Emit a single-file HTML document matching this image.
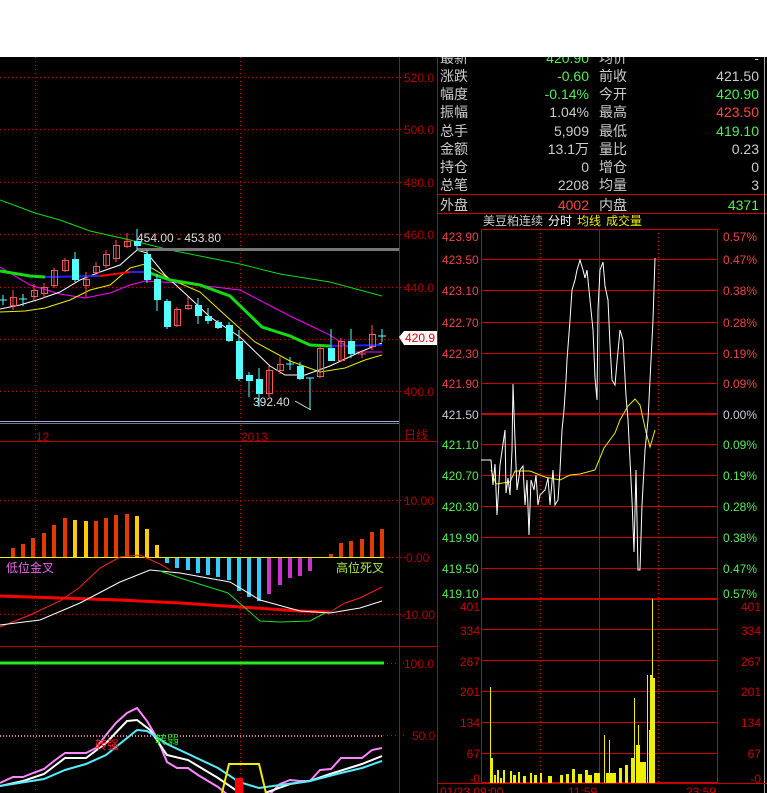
<!DOCTYPE html>
<html><head><meta charset="utf-8"><style>
html,body{margin:0;padding:0;background:#fff;}
body{width:767px;height:793px;overflow:hidden;position:relative;font-family:"Liberation Sans","Noto Sans CJK SC",sans-serif;}
svg{position:absolute;left:0;top:0;}
text{font-family:"Liberation Sans","Noto Sans CJK SC",sans-serif;}
</style></head><body>
<svg width="767" height="793" viewBox="0 0 767 793">
<rect x="0" y="57" width="767" height="736" fill="#000"/>
<g stroke="#c00000" stroke-width="1" fill="none">
<line x1="399.5" y1="57" x2="399.5" y2="793"/>
<line x1="437.5" y1="57" x2="437.5" y2="793"/>
<line x1="0" y1="441.5" x2="437" y2="441.5"/>
<line x1="0" y1="646.5" x2="437" y2="646.5"/>
</g>
<g stroke="#c00000" stroke-width="1" stroke-dasharray="1,3" fill="none">
<line x1="35.5" y1="57" x2="35.5" y2="793"/>
<line x1="240.5" y1="57" x2="240.5" y2="793"/>
<line x1="0" y1="77.5" x2="405" y2="77.5"/>
<line x1="0" y1="129.5" x2="405" y2="129.5"/>
<line x1="0" y1="182.5" x2="405" y2="182.5"/>
<line x1="0" y1="234.5" x2="405" y2="234.5"/>
<line x1="0" y1="287.5" x2="405" y2="287.5"/>
<line x1="0" y1="339.5" x2="405" y2="339.5"/>
<line x1="0" y1="391.5" x2="405" y2="391.5"/>
<line x1="0" y1="500.5" x2="405" y2="500.5"/>
<line x1="0" y1="557.5" x2="405" y2="557.5"/>
<line x1="0" y1="614.5" x2="405" y2="614.5"/>
<line x1="383" y1="663.5" x2="405" y2="663.5"/>
<line x1="383" y1="735.5" x2="405" y2="735.5"/>
</g>
<g font-size="12" fill="#b00000">
<text x="404" y="82">520.0</text><text x="404" y="134">500.0</text><text x="404" y="187">480.0</text>
<text x="404" y="239">460.0</text><text x="404" y="292">440.0</text><text x="404" y="396">400.0</text>
<text x="404" y="505">10.00</text><text x="406" y="562">0.00</text><text x="401" y="619">-10.00</text>
<text x="404" y="668">100.0</text><text x="412" y="740">50.0</text>
<text x="404" y="439" font-size="12">日线</text>
<text x="36" y="441">12</text><text x="241" y="441">2013</text>
</g>
<polygon points="399,337 404,331 437,331 437,345 404,345" fill="#fff"/>
<text x="405" y="342" font-size="12" fill="#d00">420.9</text>
<line x1="0" y1="421.5" x2="399" y2="421.5" stroke="#aab" stroke-width="1"/>
<line x1="0" y1="423.5" x2="399" y2="423.5" stroke="#6677aa" stroke-width="1"/>
<polyline fill="none" stroke="#1d1" stroke-width="1" points="0,200 35,213 60,220 90,231 130,240 170,250 240,264 280,274 330,282 382,296"/>
<polyline fill="none" stroke="#f0f" stroke-width="1" points="0,267 30,285 60,294 85,298 110,293 130,285 145,281 180,283 240,290 290,316 330,335 355,352 382,352"/>
<polyline fill="none" stroke="#ee0" stroke-width="1" points="0,312 25,311 45,308 70,300 90,290 110,285 130,268 145,264 170,279 200,292 225,315 255,342 290,361 320,372 345,368 365,360 382,355"/>
<polyline fill="none" stroke="#fff" stroke-width="1" points="0,309 20,305 40,299 60,292 80,280 100,272 120,265 137,250 147,253 165,275 190,298 210,317 240,337 270,366 285,375 305,375 330,366 360,352 382,343"/>
<polyline fill="none" stroke="#1d1" stroke-width="3" points="0,271 30,276 45,277"/>
<polyline fill="none" stroke="#22f" stroke-width="2" points="45,277 100,276"/>
<polyline fill="none" stroke="#f00" stroke-width="2" points="100,276 130,272"/>
<polyline fill="none" stroke="#22f" stroke-width="2" points="130,272 147,272"/>
<polyline fill="none" stroke="#1d1" stroke-width="3" points="147,272 170,280 200,285 230,296 262,327 290,336 310,345 330,346"/>
<polyline fill="none" stroke="#22f" stroke-width="2" points="330,346 382,345"/>
<line x1="137" y1="249.5" x2="399" y2="249.5" stroke="#777" stroke-width="3"/>
<text x="137" y="242" font-size="12" fill="#ddd">454.00 - 453.80</text>
<text x="253" y="406" font-size="12" fill="#ddd">392.40</text>
<polyline points="295,401 311,410" fill="none" stroke="#ddd"/>
<g stroke-width="1">
<g stroke="#f55" fill="none">
<line x1="13" y1="290" x2="13" y2="310"/><rect x="10.5" y="297.5" width="6" height="8"/>
<line x1="34" y1="284" x2="34" y2="300"/><rect x="31.5" y="290.5" width="6" height="6"/>
<line x1="44" y1="283" x2="44" y2="298"/><rect x="41.5" y="287.5" width="6" height="6"/>
<line x1="54" y1="268" x2="54" y2="288"/><rect x="51.5" y="270.5" width="6" height="15"/>
<line x1="65" y1="258" x2="65" y2="272"/><rect x="62.5" y="260.5" width="6" height="10"/>
<line x1="86" y1="272" x2="86" y2="297"/><rect x="83.5" y="279.5" width="6" height="6"/>
<line x1="96" y1="262" x2="96" y2="275"/><rect x="93.5" y="266.5" width="6" height="6"/>
<line x1="106" y1="250" x2="106" y2="268"/><rect x="103.5" y="254.5" width="6" height="11"/>
<line x1="116" y1="240" x2="116" y2="262"/><rect x="113.5" y="245.5" width="6" height="13"/>
<line x1="127" y1="233" x2="127" y2="248"/><rect x="124.5" y="241.5" width="6" height="5"/>
<line x1="177" y1="307" x2="177" y2="327"/><rect x="174.5" y="309.5" width="6" height="16"/>
<line x1="188" y1="297" x2="188" y2="310"/><rect x="185.5" y="305.5" width="6" height="3"/>
<line x1="269" y1="366" x2="269" y2="397"/><rect x="266.5" y="370.5" width="6" height="23"/>
<line x1="280" y1="357" x2="280" y2="374"/><rect x="277.5" y="364.5" width="6" height="6"/>
<line x1="320" y1="345" x2="320" y2="378"/><rect x="317.5" y="348.5" width="6" height="28"/>
<line x1="341" y1="338" x2="341" y2="362"/><rect x="338.5" y="341.5" width="6" height="19"/>
<line x1="362" y1="350" x2="362" y2="358"/><line x1="358" y1="354" x2="366" y2="354"/>
<line x1="372" y1="325" x2="372" y2="350"/><rect x="369.5" y="334.5" width="6" height="12"/>
</g>
<g stroke="#5ff" fill="#5ff">
<line x1="3" y1="295" x2="3" y2="305"/><line x1="0" y1="300" x2="7" y2="300"/>
<line x1="23" y1="294" x2="23" y2="306"/><line x1="19" y1="299" x2="27" y2="299"/>
<line x1="75" y1="252" x2="75" y2="282"/><rect x="72.5" y="259.5" width="6" height="20"/>
<line x1="137" y1="229" x2="137" y2="250"/><rect x="134.5" y="241.5" width="6" height="4"/>
<line x1="147" y1="250" x2="147" y2="283"/><rect x="144.5" y="254.5" width="6" height="25"/>
<line x1="157" y1="274" x2="157" y2="311"/><rect x="154.5" y="279.5" width="6" height="20"/>
<line x1="167" y1="299" x2="167" y2="329"/><rect x="164.5" y="301.5" width="6" height="25"/>
<line x1="198" y1="298" x2="198" y2="324"/><rect x="195.5" y="305.5" width="6" height="10"/>
<line x1="208" y1="308" x2="208" y2="324"/><rect x="205.5" y="316.5" width="6" height="4"/>
<line x1="218" y1="320" x2="218" y2="329"/><rect x="215.5" y="322.5" width="6" height="5"/>
<line x1="229" y1="322" x2="229" y2="342"/><rect x="226.5" y="325.5" width="6" height="15"/>
<line x1="239" y1="330" x2="239" y2="381"/><rect x="236.5" y="341.5" width="6" height="37"/>
<line x1="249" y1="372" x2="249" y2="397"/><rect x="246.5" y="375.5" width="6" height="5"/>
<line x1="259" y1="368" x2="259" y2="407"/><rect x="256.5" y="379.5" width="6" height="14"/>
<line x1="290" y1="357" x2="290" y2="370"/><line x1="286" y1="364" x2="294" y2="364"/>
<line x1="300" y1="362" x2="300" y2="380"/><rect x="297.5" y="366.5" width="6" height="12"/>
<line x1="310" y1="378" x2="310" y2="410"/><line x1="306" y1="378" x2="314" y2="378"/>
<line x1="331" y1="329" x2="331" y2="361"/><rect x="328.5" y="348.5" width="6" height="12"/>
<line x1="351" y1="329" x2="351" y2="358"/><rect x="348.5" y="341.5" width="6" height="12"/>
<line x1="382" y1="329" x2="382" y2="342"/><line x1="378" y1="336" x2="386" y2="336"/>
</g>
</g>
<g stroke="none">
<g fill="#e33a00">
<rect x="11" y="548" width="4" height="9"/><rect x="21" y="544" width="4" height="13"/><rect x="31" y="538" width="4" height="19"/>
<rect x="42" y="533" width="4" height="24"/><rect x="52" y="525" width="4" height="32"/><rect x="63" y="518" width="4" height="39"/>
<rect x="94" y="521" width="4" height="36"/><rect x="104" y="518" width="4" height="39"/><rect x="114" y="515" width="4" height="42"/><rect x="125" y="514" width="4" height="43"/>
<rect x="329" y="554" width="4" height="3"/><rect x="339" y="543" width="4" height="14"/><rect x="349" y="541" width="4" height="16"/><rect x="360" y="539" width="4" height="18"/><rect x="370" y="532" width="4" height="25"/><rect x="380" y="529" width="4" height="28"/>
</g>
<g fill="#fc0">
<rect x="73" y="520" width="4" height="37"/><rect x="84" y="521" width="4" height="36"/><rect x="135" y="516" width="4" height="41"/><rect x="145" y="529" width="4" height="28"/><rect x="155" y="545" width="4" height="12"/>
</g>
<g fill="#3cf">
<rect x="165" y="557" width="4" height="6"/><rect x="175" y="557" width="4" height="11"/><rect x="186" y="557" width="4" height="13"/><rect x="196" y="557" width="4" height="16"/><rect x="206" y="557" width="4" height="18"/><rect x="216" y="557" width="4" height="20"/><rect x="227" y="557" width="4" height="23"/><rect x="237" y="557" width="4" height="34"/><rect x="247" y="557" width="4" height="40"/><rect x="257" y="557" width="4" height="44"/>
</g>
<g fill="#c3c">
<rect x="267" y="557" width="4" height="37"/><rect x="278" y="557" width="4" height="28"/><rect x="288" y="557" width="4" height="21"/><rect x="298" y="557" width="4" height="19"/><rect x="308" y="557" width="4" height="14"/>
</g>
</g>
<line x1="0" y1="557.5" x2="384" y2="557.5" stroke="#ee0" stroke-width="1"/>
<polyline fill="none" stroke="#f00" stroke-width="3" points="0,596 60,598 120,600 180,603 240,607 300,611 330,612"/>
<polyline fill="none" stroke="#f22" stroke-width="1" points="0,627 30,615 60,601 80,587 100,568 120,557 140,555 160,564 170,570"/>
<polyline fill="none" stroke="#f22" stroke-width="1" points="330,612 345,603 360,598 382,587"/>
<polyline fill="none" stroke="#fff" stroke-width="1" points="0,625 40,620 80,603 120,582 150,570 180,573 230,582 260,600 300,611 330,613 360,608 382,601"/>
<polyline fill="none" stroke="#2d2" stroke-width="1" points="160,571 180,578 228,593 260,621 280,622 310,621 325,613"/>
<text x="6" y="572" font-size="12" fill="#e6e">低位金叉</text>
<text x="336" y="572" font-size="12" fill="#ae4">高位死叉</text>
<line x1="0" y1="663" x2="384" y2="663" stroke="#2e2" stroke-width="3"/>
<line x1="0" y1="736" x2="384" y2="736" stroke="#d7a" stroke-width="2" stroke-dasharray="1,2"/>
<polyline fill="none" stroke="#f8f" stroke-width="2" points="0,783 13,777 23,777 33,773 44,769 54,761 65,753 75,753 86,753 96,748 106,735 116,723 127,713 137,708 147,721 157,738 167,762 177,768 188,768 198,775 208,781 218,787 228,795"/>
<polyline fill="none" stroke="#f8f" stroke-width="2" points="269,795 280,784 290,780 300,781 310,781 320,770 331,769 341,758 351,758 362,758 372,750 382,748"/>
<polyline fill="none" stroke="#fff" stroke-width="2" points="0,786 23,781 44,774 65,758 86,758 106,743 127,721 137,720 150,730 167,755 188,760 218,778 240,793"/>
<polyline fill="none" stroke="#fff" stroke-width="2" points="265,793 290,784 310,781 330,774 362,764 382,756"/>
<polyline fill="none" stroke="#5ef" stroke-width="2" points="0,786 44,779 65,770 86,764 106,755 137,730 147,731 167,744 218,768 239,782 259,788 280,785 310,781 341,773 362,768 382,761"/>
<polyline fill="none" stroke="#ee0" stroke-width="2" points="222,793 229,764 259,764 266,793"/>
<rect x="235" y="778" width="8" height="15" fill="#f00"/>
<text x="95" y="749" font-size="12" fill="#f22">转强</text>
<text x="155" y="744" font-size="12" fill="#2d2">转弱</text>
<g font-size="14">
<g fill="#ccc">
<text x="440" y="63">最新</text><text x="440" y="81">涨跌</text><text x="440" y="99">幅度</text><text x="440" y="117">振幅</text><text x="440" y="136">总手</text><text x="440" y="154">金额</text><text x="440" y="172">持仓</text><text x="440" y="190">总笔</text>
<text x="599" y="63">均价</text><text x="599" y="81">前收</text><text x="599" y="99">今开</text><text x="599" y="117">最高</text><text x="599" y="136">最低</text><text x="599" y="154">量比</text><text x="599" y="172">增仓</text><text x="599" y="190">均量</text>
<text x="440" y="210">外盘</text><text x="599" y="210">内盘</text>
</g>
<g text-anchor="end">
<text x="589" y="63" fill="#5e5">420.90</text><text x="589" y="81" fill="#5e5">-0.60</text><text x="589" y="99" fill="#5e5">-0.14%</text><text x="589" y="117" fill="#ccc">1.04%</text><text x="589" y="136" fill="#ccc">5,909</text><text x="589" y="154" fill="#ccc">13.1万</text><text x="589" y="172" fill="#ccc">0</text><text x="589" y="190" fill="#ccc">2208</text>
<text x="759" y="63" fill="#ccc">-</text><text x="759" y="81" fill="#ccc">421.50</text><text x="759" y="99" fill="#5e5">420.90</text><text x="759" y="117" fill="#f44">423.50</text><text x="759" y="136" fill="#5e5">419.10</text><text x="759" y="154" fill="#ccc">0.23</text><text x="759" y="172" fill="#ccc">0</text><text x="759" y="190" fill="#ccc">3</text>
<text x="589" y="210" fill="#f44">4002</text><text x="759" y="210" fill="#5e5">4371</text>
</g>
</g>
<rect x="0" y="0" width="767" height="57" fill="#fff"/>
<line x1="437" y1="194.5" x2="767" y2="194.5" stroke="#c00" stroke-width="1"/>
<line x1="437" y1="213.5" x2="767" y2="213.5" stroke="#c00" stroke-width="1"/>
<line x1="764.5" y1="57" x2="764.5" y2="793" stroke="#aaa" stroke-width="1"/>
<g font-size="12"><text x="483" y="225" fill="#ccc">美豆粕连续</text><text x="548" y="225" fill="#fff">分时</text><text x="577" y="225" fill="#ee0">均线</text><text x="606" y="225" fill="#ee0">成交量</text></g>
<g stroke="#c00" stroke-width="1" fill="none">
<rect x="481.5" y="229.5" width="236" height="553"/>
<line x1="481" y1="259.5" x2="718" y2="259.5"/><line x1="481" y1="290.5" x2="718" y2="290.5"/><line x1="481" y1="322.5" x2="718" y2="322.5"/><line x1="481" y1="353.5" x2="718" y2="353.5"/><line x1="481" y1="383.5" x2="718" y2="383.5"/>
<line x1="481" y1="414" x2="718" y2="414" stroke-width="2"/>
<line x1="481" y1="444.5" x2="718" y2="444.5"/><line x1="481" y1="475.5" x2="718" y2="475.5"/><line x1="481" y1="506.5" x2="718" y2="506.5"/><line x1="481" y1="537.5" x2="718" y2="537.5"/><line x1="481" y1="568.5" x2="718" y2="568.5"/>
<line x1="481" y1="599" x2="718" y2="599" stroke-width="2"/>
<line x1="481" y1="629.5" x2="718" y2="629.5"/><line x1="481" y1="660.5" x2="718" y2="660.5"/><line x1="481" y1="691.5" x2="718" y2="691.5"/><line x1="481" y1="722.5" x2="718" y2="722.5"/><line x1="481" y1="753.5" x2="718" y2="753.5"/>
<line x1="599.5" y1="229" x2="599.5" y2="783"/>
<line x1="437" y1="783.5" x2="767" y2="783.5"/>
</g>
<g stroke="#c00" stroke-width="1" stroke-dasharray="1,3"><line x1="540.5" y1="229" x2="540.5" y2="783"/><line x1="658.5" y1="229" x2="658.5" y2="783"/></g>
<g font-size="12">
<g fill="#e44"><text x="442" y="241">423.90</text><text x="442" y="264">423.50</text><text x="442" y="295">423.10</text><text x="442" y="327">422.70</text><text x="442" y="358">422.30</text><text x="442" y="388">421.90</text>
<text x="723" y="241">0.57%</text><text x="723" y="264">0.47%</text><text x="723" y="295">0.38%</text><text x="723" y="327">0.28%</text><text x="723" y="358">0.19%</text><text x="723" y="388">0.09%</text></g>
<text x="442" y="419" fill="#ccd">421.50</text><text x="723" y="419" fill="#ccd">0.00%</text>
<g fill="#5e5"><text x="442" y="449">421.10</text><text x="442" y="480">420.70</text><text x="442" y="511">420.30</text><text x="442" y="542">419.90</text><text x="442" y="573">419.50</text><text x="442" y="598">419.10</text>
<text x="723" y="449">0.09%</text><text x="723" y="480">0.19%</text><text x="723" y="511">0.28%</text><text x="723" y="542">0.38%</text><text x="723" y="573">0.47%</text><text x="723" y="598">0.57%</text></g>
<g fill="#c00" text-anchor="end"><text x="480" y="611">401</text><text x="480" y="635">334</text><text x="480" y="666">267</text><text x="480" y="696">201</text><text x="480" y="727">134</text><text x="480" y="758">67</text><text x="480" y="783">-0</text>
<text x="761" y="611">401</text><text x="761" y="635">334</text><text x="761" y="666">267</text><text x="761" y="696">201</text><text x="761" y="727">134</text><text x="761" y="758">67</text><text x="761" y="783">-0</text></g>
<text x="440" y="796" fill="#c00">01/23 09:00</text><text x="568" y="796" fill="#c00">11:59</text><text x="686" y="796" fill="#c00">23:59</text>
</g>
<polyline fill="none" stroke="#ee0" stroke-width="1" points="491,470 496,484 510,482 515,471 530,471 545,477 560,480 570,475 580,474 595,470 604,448 615,433 620,420 628,406 635,399 640,405 646,432 650,447 655,430"/>
<polyline fill="none" stroke="#fff" stroke-width="1" points="481,460 491,460 493,485 495,464 497,515 499,482 500,465 505,430 506,493 508,478 510,495 512,450 513,384 515,440 517,490 520,470 523,466 525,505 527,480 529,535 531,480 534,490 536,475 538,505 540,495 545,490 548,478 550,505 553,470 555,505 558,500 560,470 562,430 564,410 566,380 567,360 570,320 572,290 575,280 577,270 580,260 583,270 585,278 587,270 590,300 593,330 595,378 597,400 598,310 600,270 603,262 605,286 608,300 610,345 612,380 615,385 617,362 620,330 623,340 626,396 628,420 632,500 634,552 636,470 638,570 640,570 642,505 645,450 648,420 650,380 653,320 655,258"/>
<g fill="#ee0">
<rect x="490" y="687" width="1" height="96"/><rect x="491" y="758" width="2" height="25"/><rect x="494" y="775" width="2" height="8"/><rect x="497" y="770" width="2" height="13"/><rect x="500" y="778" width="2" height="5"/><rect x="503" y="770" width="2" height="13"/>
<rect x="510" y="771" width="2" height="12"/><rect x="513" y="775" width="3" height="8"/><rect x="518" y="772" width="2" height="11"/><rect x="523" y="776" width="3" height="7"/><rect x="530" y="773" width="2" height="10"/><rect x="534" y="775" width="3" height="8"/><rect x="540" y="773" width="2" height="10"/>
<rect x="548" y="776" width="4" height="7"/><rect x="560" y="775" width="3" height="8"/><rect x="566" y="774" width="3" height="9"/><rect x="572" y="769" width="3" height="14"/><rect x="578" y="774" width="4" height="9"/>
<rect x="585" y="770" width="3" height="13"/><rect x="588" y="775" width="4" height="8"/><rect x="594" y="773" width="6" height="10"/><rect x="604" y="735" width="1" height="48"/><rect x="609" y="740" width="1" height="43"/><rect x="606" y="773" width="10" height="10"/>
<rect x="619" y="768" width="3" height="15"/><rect x="625" y="765" width="3" height="18"/><rect x="631" y="758" width="4" height="25"/><rect x="634" y="698" width="1" height="85"/><rect x="638" y="725" width="1" height="58"/>
<rect x="636" y="745" width="4" height="38"/><rect x="640" y="762" width="6" height="21"/><rect x="647" y="675" width="1" height="108"/><rect x="649" y="730" width="3" height="53"/>
<rect x="650" y="675" width="2" height="108"/><rect x="652" y="599" width="1" height="184"/><rect x="653" y="678" width="2" height="105"/>
</g>
</svg>
</body></html>
